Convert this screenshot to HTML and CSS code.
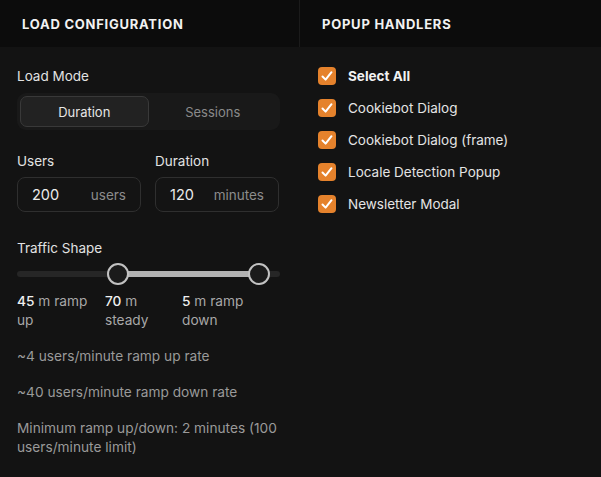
FILE: index.html
```html
<!DOCTYPE html>
<html>
<head>
<meta charset="utf-8">
<link rel="stylesheet" href="styles.css">
</head>
<body>
<div class="panels">
  <section class="panel panel-left">
    <header class="panel-head">LOAD CONFIGURATION</header>
    <div class="panel-body">
      <div class="label">Load Mode</div>
      <div class="segmented">
        <div class="seg seg-active">Duration</div>
        <div class="seg">Sessions</div>
      </div>
      <div class="fields">
        <div class="field">
          <div class="label">Users</div>
          <div class="input"><span class="val">200</span><span class="unit">users</span></div>
        </div>
        <div class="field">
          <div class="label">Duration</div>
          <div class="input"><span class="val">120</span><span class="unit">minutes</span></div>
        </div>
      </div>
      <div class="label shape-label">Traffic Shape</div>
      <div class="slider">
        <div class="track"></div>
        <div class="fill"></div>
        <div class="thumb thumb-a"></div>
        <div class="thumb thumb-b"></div>
      </div>
      <div class="segments">
        <div class="segtxt"><span class="num">45</span> m ramp up</div>
        <div class="segtxt"><span class="num">70</span> m steady</div>
        <div class="segtxt"><span class="num">5</span> m ramp down</div>
      </div>
      <p class="note">~4 users/minute ramp up rate</p>
      <p class="note">~40 users/minute ramp down rate</p>
      <p class="note">Minimum ramp up/down: 2 minutes (100 users/minute limit)</p>
    </div>
  </section>
  <section class="panel panel-right">
    <header class="panel-head">POPUP HANDLERS</header>
    <div class="panel-body list">
      <label class="check-row strong"><span class="box"><svg viewBox="0 0 18 18" width="18" height="18"><path d="M4.5 9.5 L7.6 12.6 L13.5 5.2" fill="none" stroke="#fff" stroke-width="2" stroke-linecap="round" stroke-linejoin="round"/></svg></span>Select All</label>
      <label class="check-row"><span class="box"><svg viewBox="0 0 18 18" width="18" height="18"><path d="M4.5 9.5 L7.6 12.6 L13.5 5.2" fill="none" stroke="#fff" stroke-width="2" stroke-linecap="round" stroke-linejoin="round"/></svg></span>Cookiebot Dialog</label>
      <label class="check-row"><span class="box"><svg viewBox="0 0 18 18" width="18" height="18"><path d="M4.5 9.5 L7.6 12.6 L13.5 5.2" fill="none" stroke="#fff" stroke-width="2" stroke-linecap="round" stroke-linejoin="round"/></svg></span>Cookiebot Dialog (frame)</label>
      <label class="check-row"><span class="box"><svg viewBox="0 0 18 18" width="18" height="18"><path d="M4.5 9.5 L7.6 12.6 L13.5 5.2" fill="none" stroke="#fff" stroke-width="2" stroke-linecap="round" stroke-linejoin="round"/></svg></span>Locale Detection Popup</label>
      <label class="check-row"><span class="box"><svg viewBox="0 0 18 18" width="18" height="18"><path d="M4.5 9.5 L7.6 12.6 L13.5 5.2" fill="none" stroke="#fff" stroke-width="2" stroke-linecap="round" stroke-linejoin="round"/></svg></span>Newsletter Modal</label>
    </div>
  </section>
</div>
</body>
</html>
```

FILE: styles.css
```css
* { box-sizing: border-box; }
html, body { margin: 0; padding: 0; }
body {
  background: #131313;
  color: #e8e8e8;
  font-family: Inter, "Noto Sans", sans-serif;
  font-size: 13.5px;
  width: 601px;
  height: 477px;
  overflow: hidden;
}
.panels {
  display: grid;
  grid-template-columns: 300px 301px;
  height: 477px;
}
.panel-head {
  height: 47px;
  background: #0c0c0c;
  display: flex;
  align-items: center;
  padding-left: 22px;
  font-weight: 700;
  font-size: 13px;
  letter-spacing: 0.75px;
  color: #f2f2f2;
}
.panel-left .panel-head { border-right: 1px solid #1b1b1b; }
.panel-body {
  padding: 20px 17px 0 17px;
}
.panel-left .panel-body { padding-right: 20px; }
.label {
  line-height: 18px;
  color: #e2e2e2;
}
.segmented {
  margin-top: 8px;
  background: #191919;
  border-radius: 9px;
  padding: 3px;
  display: grid;
  grid-template-columns: 1fr 1fr;
  height: 37px;
}
.seg {
  display: flex;
  align-items: center;
  justify-content: center;
  color: #8a8a8a;
  border-radius: 7px;
  border: 1px solid transparent;
  font-size: 13px;
}
.seg-active {
  background: #222222;
  border-color: #393939;
  color: #e6e6e6;
}
.fields {
  margin-top: 22px;
  display: grid;
  grid-template-columns: 124px 124px;
  column-gap: 14px;
}
.field .input {
  margin-top: 7px;
  height: 35px;
  border: 1px solid #2f2f2f;
  border-radius: 8px;
  background: #141414;
  display: flex;
  align-items: center;
  justify-content: space-between;
  padding: 0 14px 0 14px;
  font-size: 14.5px;
}
.val { color: #ececec; }
.unit { color: #8c8c8c; font-size: 13.5px; }
.shape-label { margin-top: 27px; }
.slider {
  position: relative;
  margin-top: 6px;
  height: 22px;
}
.track {
  position: absolute;
  left: 0; right: 0; top: 8px;
  height: 6px;
  border-radius: 3px;
  background: #262626;
}
.fill {
  position: absolute;
  left: 101px; width: 141px; top: 8px;
  height: 6px;
  background: #b3b3b3;
}
.thumb {
  position: absolute;
  top: 0;
  width: 22px; height: 22px;
  border-radius: 50%;
  border: 2px solid #c2c2c2;
  background: #1b1b1b;
}
.thumb-a { left: 90px; }
.thumb-b { left: 231px; }
.segments {
  margin-top: 7px;
  display: grid;
  grid-template-columns: 88px 77px 82px;
}
.segtxt {
  line-height: 19px;
  color: #a8a8a8;
  font-size: 13.7px;
}
.segtxt .num { color: #f0f0f0; font-weight: 500; }
.note {
  margin: 17px 0 0 0;
  line-height: 19px;
  color: #9a9a9a;
  font-size: 13.7px;
}
.list {
  display: flex;
  flex-direction: column;
  gap: 14px;
  padding-left: 18px;
}
.check-row {
  display: flex;
  align-items: center;
  height: 18px;
  color: #e4e4e4;
  font-size: 13.5px;
}
.check-row.strong { font-weight: 700; color: #f2f2f2; }
.box {
  width: 18px; height: 18px;
  border-radius: 4px;
  background: #e5822c;
  margin-right: 12px;
  display: flex;
  align-items: center;
  justify-content: center;
}
.box svg { display: block; }
```
